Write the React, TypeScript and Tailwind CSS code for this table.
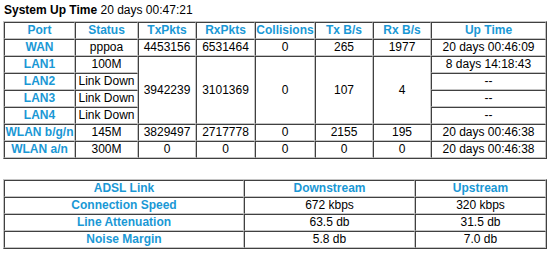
import type { ReactNode } from 'react';

/* ── Data ──────────────────────────────────────────────────── */

const ports = [
  { port: 'WAN', status: 'pppoa', tx: '4453156', rx: '6531464', col: '0', txb: '265', rxb: '1977', up: '20 days 00:46:09' },
];

const adsl = [
  { label: 'Connection Speed', down: '672 kbps', up: '320 kbps' },
  { label: 'Line Attenuation', down: '63.5 db', up: '31.5 db' },
  { label: 'Noise Margin', down: '5.8 db', up: '7.0 db' },
];

/* ── Cells (IE-style inset borders) ────────────────────────── */

const cellBase =
  'border border-t-[#404040] border-l-[#404040] border-b-[#c4c4c4] border-r-[#c4c4c4] p-0 text-center align-middle leading-[15px]';

function Th({ children, className = '' }: { children: ReactNode; className?: string }) {
  return <td className={`${cellBase} font-bold text-[#1a98d5] ${className}`}>{children}</td>;
}

function Td({
  children,
  rowSpan,
  className = '',
}: {
  children: ReactNode;
  rowSpan?: number;
  className?: string;
}) {
  return (
    <td rowSpan={rowSpan} className={`${cellBase} text-black ${className}`}>
      {children}
    </td>
  );
}

const tableCls =
  'table-fixed border-separate border-spacing-0 border border-t-[#c4c4c4] border-l-[#c4c4c4] border-b-[#404040] border-r-[#404040] w-[544px]';

/* ── App ───────────────────────────────────────────────────── */

export default function App() {
  return (
    <div className="min-h-[253px] w-[551px] bg-white pl-[3px] pt-[3px] font-['Liberation_Sans',Arial,sans-serif] text-[12px] text-black">
      <div className="pl-[1px] leading-[14px]">
        <span className="font-bold">System Up Time</span> 20 days 00:47:21
      </div>

      {/* Port statistics */}
      <table className={`${tableCls} mt-[4px]`}>
        <tbody>
          <tr>
            <Th className="w-[71px]">Port</Th>
            <Th className="w-[63px]">Status</Th>
            <Th className="w-[58px]">TxPkts</Th>
            <Th className="w-[59px]">RxPkts</Th>
            <Th className="w-[60px]">Collisions</Th>
            <Th className="w-[58px]">Tx B/s</Th>
            <Th className="w-[58px]">Rx B/s</Th>
            <Th className="w-[115px]">Up Time</Th>
          </tr>
          {ports.map((p) => (
            <tr key={p.port}>
              <Th>{p.port}</Th>
              <Td>{p.status}</Td>
              <Td>{p.tx}</Td>
              <Td>{p.rx}</Td>
              <Td>{p.col}</Td>
              <Td>{p.txb}</Td>
              <Td>{p.rxb}</Td>
              <Td>{p.up}</Td>
            </tr>
          ))}
          <tr>
            <Th>LAN1</Th>
            <Td>100M</Td>
            <Td rowSpan={4}>3942239</Td>
            <Td rowSpan={4}>3101369</Td>
            <Td rowSpan={4}>0</Td>
            <Td rowSpan={4}>107</Td>
            <Td rowSpan={4}>4</Td>
            <Td>8 days 14:18:43</Td>
          </tr>
          {['LAN2', 'LAN3', 'LAN4'].map((lan) => (
            <tr key={lan}>
              <Th>{lan}</Th>
              <Td>Link Down</Td>
              <Td>--</Td>
            </tr>
          ))}
          <tr>
            <Th>WLAN b/g/n</Th>
            <Td>145M</Td>
            <Td>3829497</Td>
            <Td>2717778</Td>
            <Td>0</Td>
            <Td>2155</Td>
            <Td>195</Td>
            <Td>20 days 00:46:38</Td>
          </tr>
          <tr>
            <Th>WLAN a/n</Th>
            <Td>300M</Td>
            <Td>0</Td>
            <Td>0</Td>
            <Td>0</Td>
            <Td>0</Td>
            <Td>0</Td>
            <Td>20 days 00:46:38</Td>
          </tr>
        </tbody>
      </table>

      {/* ADSL link */}
      <table className={`${tableCls} mt-[20px]`}>
        <tbody>
          <tr>
            <Th className="w-[240px]">ADSL Link</Th>
            <Th className="w-[171px]">Downstream</Th>
            <Th className="w-[131px]">Upstream</Th>
          </tr>
          {adsl.map((r) => (
            <tr key={r.label}>
              <Th>{r.label}</Th>
              <Td>{r.down}</Td>
              <Td>{r.up}</Td>
            </tr>
          ))}
        </tbody>
      </table>
    </div>
  );
}
